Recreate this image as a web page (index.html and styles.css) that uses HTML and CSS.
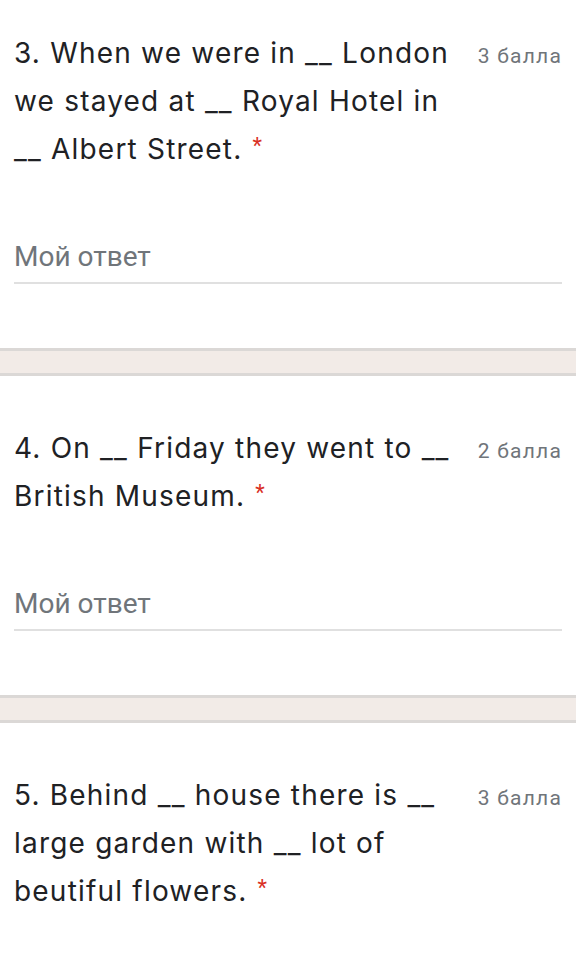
FILE: index.html
```html
<!DOCTYPE html>
<html lang="ru">
<head>
<meta charset="utf-8">
<link rel="stylesheet" href="styles.css">
</head>
<body>
<div class="page">
  <div class="card">
    <div class="head">
      <div class="title">3. When we were in __ London we stayed at __ Royal Hotel in __ Albert Street.<span class="req">*</span></div>
      <div class="points">3 балла</div>
    </div>
    <div class="answer">Мой ответ</div>
  </div>
  <div class="sep"></div>
  <div class="card">
    <div class="head">
      <div class="title">4. On __ Friday they went to __ British Museum.<span class="req">*</span></div>
      <div class="points">2 балла</div>
    </div>
    <div class="answer">Мой ответ</div>
  </div>
  <div class="sep"></div>
  <div class="card">
    <div class="head">
      <div class="title">5. Behind __ house there is __ large garden with __ lot of beutiful flowers.<span class="req">*</span></div>
      <div class="points">3 балла</div>
    </div>
  </div>
</div>
</body>
</html>
```

FILE: styles.css
```css
html, body {
  margin: 0;
  padding: 0;
  background: #ffffff;
}
body {
  font-family: Roboto, "Noto Sans", sans-serif;
  color: #202124;
  overflow: hidden;
}
.page {
  margin-top: -19px;
}
.card {
  padding: 48px 14px 64px;
  background: #ffffff;
}
.head {
  display: flex;
  align-items: baseline;
}
.title {
  flex: 1;
  font-family: Inter, "Open Sans", sans-serif;
  font-size: 28px;
  letter-spacing: 1.2px;
  line-height: 48px;
  color: #202124;
}
.req {
  margin-left: 10px;
  color: #d93025;
  font-family: Roboto, sans-serif;
  font-size: 22px;
  letter-spacing: 0;
  vertical-align: 6px;
  line-height: 0;
}
.points {
  margin-left: 12px;
  font-size: 21px;
  letter-spacing: 1.2px;
  line-height: 48px;
  color: #70757a;
  white-space: nowrap;
}
.answer {
  margin-top: 60px;
  font-size: 28px;
  line-height: 48px;
  color: #70757a;
  padding-bottom: 1px;
  border-bottom: 2px solid #e0e0e0;
}
.sep {
  height: 22px;
  background: #f2ebe7;
  border-top: 3px solid #dbd8d6;
  border-bottom: 3px solid #dbd8d6;
}
```
